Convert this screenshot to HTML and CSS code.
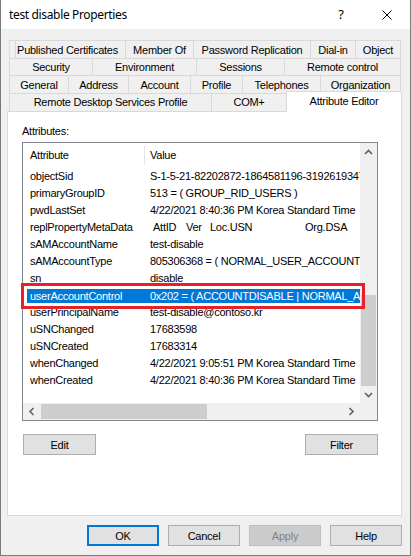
FILE: index.html
```html
<!DOCTYPE html>
<html>
<head>
<meta charset="utf-8">
<link rel="stylesheet" href="styles.css">
</head>
<body>
<div class="window">
  <div class="titlebar">
    <span class="title">test disable Properties</span>
    <div class="tb-btn help">?</div>
    <div class="tb-btn close">
      <svg width="10" height="10" viewBox="0 0 10 10"><path d="M0.5 0.5 L9.5 9.5 M9.5 0.5 L0.5 9.5" stroke="#000" stroke-width="1" fill="none"/></svg>
    </div>
  </div>
  <div class="content">
    <div class="tabs">
      <div class="tab-row r1">
        <div class="tab first w116">Published Certificates</div>
        <div class="tab w68">Member Of</div>
        <div class="tab w117">Password Replication</div>
        <div class="tab w45">Dial-in</div>
        <div class="tab last w46">Object</div>
      </div>
      <div class="tab-row r2">
        <div class="tab w83">Security</div>
        <div class="tab w104">Environment</div>
        <div class="tab w88">Sessions</div>
        <div class="tab last w117">Remote control</div>
      </div>
      <div class="tab-row r3">
        <div class="tab w59">General</div>
        <div class="tab w60">Address</div>
        <div class="tab w62">Account</div>
        <div class="tab w52">Profile</div>
        <div class="tab w78">Telephones</div>
        <div class="tab last w81">Organization</div>
      </div>
      <div class="tab-row r4">
        <div class="tab w202">Remote Desktop Services Profile</div>
        <div class="tab w75">COM+</div>
        <div class="tab active w116">Attribute Editor</div>
      </div>
    </div>
    <div class="panel">
      <div class="label">Attributes:</div>
      <div class="listbox">
        <div class="lv">
          <div class="lv-head">
            <div class="hc hc1">Attribute</div>
            <div class="hc hc2">Value</div>
          </div>
          <div class="lv-row"><span class="c1">objectSid</span><span class="c2">S-1-5-21-82202872-1864581196-3192619347-1105</span></div>
          <div class="lv-row"><span class="c1">primaryGroupID</span><span class="c2">513 = ( GROUP_RID_USERS )</span></div>
          <div class="lv-row"><span class="c1">pwdLastSet</span><span class="c2">4/22/2021 8:40:36 PM Korea Standard Time</span></div>
          <div class="lv-row"><span class="c1">replPropertyMetaData</span><span class="c2 meta"><span class="m1">AttID</span><span class="m2">Ver</span><span class="m3">Loc.USN</span><span class="m4">Org.DSA</span></span></div>
          <div class="lv-row"><span class="c1">sAMAccountName</span><span class="c2">test-disable</span></div>
          <div class="lv-row"><span class="c1">sAMAccountType</span><span class="c2">805306368 = ( NORMAL_USER_ACCOUNT )</span></div>
          <div class="lv-row"><span class="c1">sn</span><span class="c2">disable</span></div>
          <div class="lv-row sel"><span class="c1">userAccountControl</span><span class="c2">0x202 = ( ACCOUNTDISABLE | NORMAL_ACCOUNT )</span></div>
          <div class="lv-row"><span class="c1">userPrincipalName</span><span class="c2">test-disable@contoso.kr</span></div>
          <div class="lv-row"><span class="c1">uSNChanged</span><span class="c2">17683598</span></div>
          <div class="lv-row"><span class="c1">uSNCreated</span><span class="c2">17683314</span></div>
          <div class="lv-row"><span class="c1">whenChanged</span><span class="c2">4/22/2021 9:05:51 PM Korea Standard Time</span></div>
          <div class="lv-row"><span class="c1">whenCreated</span><span class="c2">4/22/2021 8:40:36 PM Korea Standard Time</span></div>
        </div>
        <div class="vscroll">
          <div class="sb-btn"><svg width="17" height="17" viewBox="0 0 17 17"><path d="M5 11 L8.5 7.5 L12 11" fill="none" stroke="#606060" stroke-width="1.6"/></svg></div>
          <div class="vtrack"><div class="vthumb"></div></div>
          <div class="sb-btn"><svg width="17" height="17" viewBox="0 0 17 17"><path d="M5 7 L8.5 10.5 L12 7" fill="none" stroke="#606060" stroke-width="1.6"/></svg></div>
        </div>
        <div class="hscroll">
          <div class="sb-btn"><svg width="17" height="17" viewBox="0 0 17 17"><path d="M10.5 5 L7 8.5 L10.5 12" fill="none" stroke="#606060" stroke-width="1.6"/></svg></div>
          <div class="htrack"><div class="hthumb"></div></div>
          <div class="sb-btn"><svg width="17" height="17" viewBox="0 0 17 17"><path d="M6.5 5 L10 8.5 L6.5 12" fill="none" stroke="#606060" stroke-width="1.6"/></svg></div>
        </div>
        <div class="corner"></div>
        <div class="redbox"></div>
      </div>
      <div class="actions">
        <div class="btn">Edit</div>
        <div class="btn">Filter</div>
      </div>
    </div>
    <div class="dlg-buttons">
      <div class="btn default">OK</div>
      <div class="btn">Cancel</div>
      <div class="btn disabled">Apply</div>
      <div class="btn">Help</div>
    </div>
  </div>
</div>
</body>
</html>
```
FILE: styles.css
```css
* { box-sizing: border-box; }
html, body { margin: 0; padding: 0; }
body {
  width: 411px;
  height: 556px;
  overflow: hidden;
  font-family: "Liberation Sans", Arial, sans-serif;
  font-size: 11px;
  letter-spacing: -0.25px;
  color: #000;
  background: #fff;
}
.window {
  width: 411px;
  height: 556px;
  border: 1px solid #7a7a7a;
  border-top: none;
  background: #f0f0f0;
  display: flex;
  flex-direction: column;
}
.titlebar {
  height: 29px;
  flex: none;
  background: #fff;
  display: flex;
  align-items: center;
}
.title {
  flex: 1;
  padding-left: 8px;
  font-family: "Noto Sans", sans-serif;
  font-size: 12px;
  letter-spacing: -0.35px;
  padding-bottom: 1px;
}
.tb-btn {
  width: 46px;
  height: 29px;
  display: flex;
  align-items: center;
  justify-content: center;
}
.help {
  font-family: "Noto Sans", sans-serif;
  font-size: 13px;
  letter-spacing: 0;
  padding-bottom: 1px;
}
.close svg { display: block; }
.content {
  flex: 1;
  padding: 11px 9px 0 6px;
  display: flex;
  flex-direction: column;
}
.tabs { margin-left: 2px; flex: none; }
.tab-row { display: flex; }
.r1 { height: 18px; }
.r2 { height: 17px; }
.r3 { height: 18px; }
.r4 { height: 18px; }
.tab {
  flex: none;
  border-top: 1px solid #d9d9d9;
  border-left: 1px solid #d9d9d9;
  display: flex;
  align-items: center;
  justify-content: center;
  white-space: nowrap;
  background: #f0f0f0;
}
.r4 .tab { padding-bottom: 1px; }
.tab.first {
  background: linear-gradient(to right, transparent 5px, #d9d9d9 5px, #d9d9d9 6px, transparent 6px), #f0f0f0;
}
.tab.last { border-right: 1px solid #d9d9d9; }
.r4 .tab.active {
  background: #fff;
  height: 21px;
  margin-top: -2px;
  align-self: flex-start;
  border-right: 1px solid #d9d9d9;
  padding-bottom: 2px;
  position: relative;
  z-index: 1;
}
.w45 { width: 45px; } .w46 { width: 46px; } .w52 { width: 52px; }
.w59 { width: 59px; } .w60 { width: 60px; } .w62 { width: 62px; }
.w68 { width: 68px; } .w75 { width: 75px; } .w78 { width: 78px; }
.w81 { width: 81px; } .w83 { width: 83px; } .w88 { width: 88px; }
.w104 { width: 104px; } .w116 { width: 116px; } .w117 { width: 117px; }
.w202 { width: 202px; }

.panel {
  flex: none;
  width: 395px;
  height: 405px;
  background: #fff;
  border: 1px solid #d9d9d9;
  padding: 12px 0 0 14px;
}
.label { height: 14px; line-height: 14px; margin-bottom: 4px; }
.listbox {
  position: relative;
  width: 356px;
  height: 279px;
  border: 1px solid #828790;
  display: grid;
  grid-template-columns: 337px 17px;
  grid-template-rows: 260px 17px;
}
.lv { background: #fff; overflow: hidden; }
.lv-head { height: 25px; display: flex; align-items: center; }
.hc { height: 19px; line-height: 19px; white-space: nowrap; }
.hc1 { width: 122px; padding-left: 7px; border-right: 1px solid #e5e5e5; }
.hc2 { padding-left: 5px; }
.lv-row {
  margin-left: 4px;
  width: 333px;
  height: 17px;
  line-height: 17px;
  display: flex;
  white-space: nowrap;
  overflow: hidden;
}
.c1 { flex: none; width: 117px; padding-left: 3px; overflow: hidden; }
.c2 { flex: none; padding-left: 6px; }
.meta { display: flex; padding-left: 9px; }
.m1 { width: 33px; }
.m2 { width: 24px; }
.m3 { width: 95px; }
.lv-row.sel {
  background: #0078d7;
  background-clip: content-box;
  padding: 2px 0 1px;
  line-height: 14px;
  color: #fff;
}
.vscroll { background: #f0f0f0; display: flex; flex-direction: column; }
.sb-btn { width: 17px; height: 17px; flex: none; }
.sb-btn svg { display: block; }
.vtrack { flex: 1; display: flex; flex-direction: column; justify-content: flex-end; }
.vthumb { height: 91px; margin: 0 1px; background: #cdcdcd; }
.hscroll { background: #f0f0f0; display: flex; }
.htrack { flex: 1; display: flex; align-items: stretch; }
.hthumb { width: 166px; margin: 1px 0 1px 1px; background: #cdcdcd; }
.corner { background: #f0f0f0; }
.redbox {
  position: absolute;
  left: -2px;
  top: 140px;
  width: 344px;
  height: 26px;
  border: 3px solid #e8202a;
}
.actions {
  display: flex;
  justify-content: space-between;
  width: 355px;
  margin: 13px 0 0 1px;
}
.btn {
  width: 73px;
  height: 21px;
  background: #e1e1e1;
  border: 1px solid #adadad;
  display: flex;
  align-items: center;
  justify-content: center;
}
.dlg-buttons {
  flex: none;
  display: flex;
  justify-content: flex-end;
  gap: 9px;
  margin: 9px -1px 0 0;
}
.dlg-buttons .btn { width: 72px; }
.btn.default { border: 2px solid #0078d7; }
.btn.disabled { background: #cccccc; border-color: #bfbfbf; color: #838383; }
```
